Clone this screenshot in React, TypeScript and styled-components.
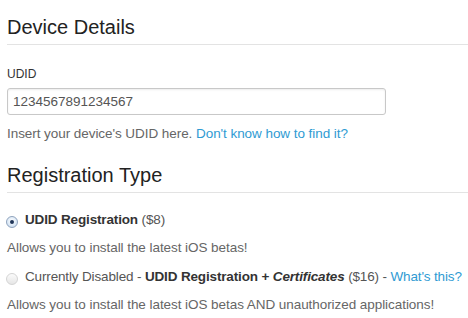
import React from 'react'
import styled, { createGlobalStyle } from 'styled-components'

const GlobalStyle = createGlobalStyle`
    html, body {
        margin: 0;
        padding: 0;
        background: #fff;
    }
    body {
        font-family: 'Liberation Sans', Arial, Helvetica, sans-serif;
        -webkit-font-smoothing: antialiased;
    }
`

const StyledPage = styled.div`
    width: 468px;
    height: 318px;
    overflow: hidden;
    padding-left: 7px;
    box-sizing: border-box;
`

const StyledHeading = styled.h2<{ $top: number }>`
    margin: ${({ $top }) => $top}px 0 0 0;
    padding-bottom: 5px;
    font-size: 20px;
    line-height: 24px;
    font-weight: normal;
    color: #222;
    border-bottom: 1px solid #e3e3e3;
`

const StyledLabel = styled.label`
    display: block;
    margin-top: 21px;
    font-size: 12px;
    line-height: 16px;
    color: #333;
`

const StyledInput = styled.input`
    display: block;
    margin-top: 6px;
    width: 379px;
    height: 27px;
    box-sizing: border-box;
    padding: 0 5px;
    border: 1px solid #c8c8c8;
    border-radius: 3px;
    box-shadow: inset 0 1px 2px rgba(0, 0, 0, 0.08);
    font-family: inherit;
    font-size: 13.5px;
    color: #555;
    outline: none;
`

const StyledText = styled.p<{ $top: number }>`
    margin: ${({ $top }) => $top}px 0 0 0;
    font-size: 13.5px;
    line-height: 18px;
    letter-spacing: -0.06px;
    color: #666;
    white-space: nowrap;
`

const StyledLink = styled.a`
    color: #2f9bd3;
    text-decoration: none;
    cursor: pointer;
`

const StyledOption = styled.label<{ $top: number }>`
    display: flex;
    align-items: flex-start;
    gap: 7px;
    margin-top: ${({ $top }) => $top}px;
    margin-left: -1px;
    font-size: 13.5px;
    line-height: 18px;
    letter-spacing: -0.15px;
    color: #555;
    white-space: nowrap;

    b {
        color: #333;
    }
`

const StyledRadio = styled.span<{ $checked?: boolean }>`
    flex: none;
    position: relative;
    width: 12px;
    height: 12px;
    margin-top: 5px;
    border-radius: 50%;
    box-sizing: border-box;
    border: 1px solid ${({ $checked }) => ($checked ? '#8fa3bd' : '#d4d4d4')};
    background: ${({ $checked }) =>
        $checked
            ? 'radial-gradient(circle at 50% 40%, #ffffff 0%, #dbe8f6 60%, #b7cbe3 100%)'
            : 'linear-gradient(#fbfbfb, #e6e6e6)'};

    &::after {
        content: '';
        display: ${({ $checked }) => ($checked ? 'block' : 'none')};
        position: absolute;
        left: 3px;
        top: 3px;
        width: 4px;
        height: 4px;
        border-radius: 50%;
        background: #1f3558;
    }
`

export default function App() {
    return (
        <StyledPage>
            <GlobalStyle />
            <StyledHeading $top={15}>Device Details</StyledHeading>
            <StyledLabel htmlFor="udid">UDID</StyledLabel>
            <StyledInput id="udid" defaultValue="1234567891234567" readOnly />
            <StyledText $top={10}>
                Insert your device's UDID here.{' '}
                <StyledLink>Don't know how to find it?</StyledLink>
            </StyledText>

            <StyledHeading $top={20}>Registration Type</StyledHeading>
            <StyledOption $top={18}>
                <StyledRadio $checked />
                <span>
                    <b>UDID Registration</b> ($8)
                </span>
            </StyledOption>
            <StyledText $top={10}>Allows you to install the latest iOS betas!</StyledText>
            <StyledOption $top={11}>
                <StyledRadio />
                <span>
                    Currently Disabled - <b>UDID Registration + <i>Certificates</i></b> ($16) -{' '}
                    <StyledLink>What's this?</StyledLink>
                </span>
            </StyledOption>
            <StyledText $top={10}>
                Allows you to install the latest iOS betas AND unauthorized applications!
            </StyledText>
        </StyledPage>
    )
}
